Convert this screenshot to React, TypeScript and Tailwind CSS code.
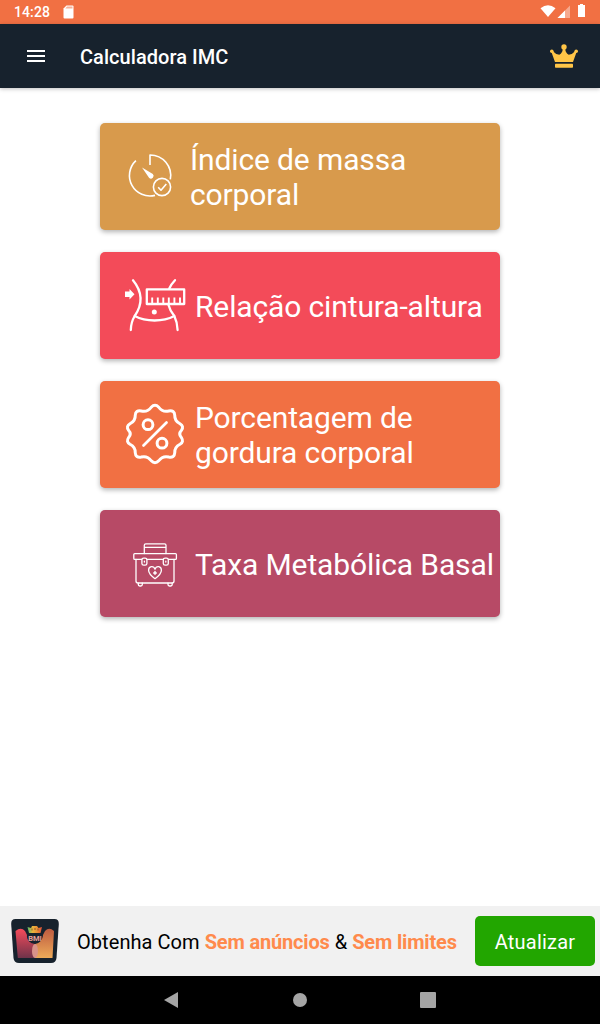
import type { ReactNode } from "react"

type CardProps = {
    color: string;
    label: string;
    textClass?: string;
    children: ReactNode;
}

function Card({ color, label, textClass = "ml-[10px]", children }: CardProps) {
    return (
        <button className={`flex h-[107px] w-[400px] items-center rounded-[5px] pl-[25px] text-left shadow-[0_2px_5px_rgba(0,0,0,0.3)] ${color}`}>
            <svg className="h-[61px] w-[60px] shrink-0 overflow-visible" viewBox="0 0 60 61" fill="none" stroke="white" strokeLinecap="round" strokeLinejoin="round">
                {children}
            </svg>
            <span className={`text-[30px] leading-[35px] tracking-[-0.13px] text-white ${textClass}`}>{label}</span>
        </button>
    )
}

function GaugeIcon() {
    return (
        <g strokeWidth="1.6" strokeLinecap="butt">
            <path d="M25 19V9A20.5 20.5 0 0 1 45.3 33.3" />
            <path d="M30 49.4A20.5 20.5 0 0 1 10.9 14.6" />
            <path d="M17 21.5L27.8 28A2.7 2.7 0 0 1 24.2 32Z" fill="white" stroke="none" />
            <circle cx="37" cy="41" r="8.6" />
            <path d="M33.2 41.2L36 44.2L41.3 38" />
        </g>
    )
}

function WaistIcon() {
    return (
        <g strokeWidth="2.3">
            <path d="M8 5.3C17.5 17 18 29 9.7 41C7 45.5 5.9 50 5.8 55" />
            <path d="M50 5.2C47.5 7.8 45.4 10.5 44.3 13.5" />
            <path d="M43.5 30C44.5 34 46.5 37.5 49.3 41C51.5 45.5 52.5 50 52.6 55" />
            <path d="M9.7 41C21 47 38 47 49.3 41" />
            <path d="M21.8 14.4H59.2V29H21.8Z" />
            <path d="M27.2 29V22.5M32.8 29V22.5M38.3 29V22.5M43.8 29V22.5M49.4 29V22.5M55 29V22.5" strokeWidth="1.9" strokeLinecap="butt" />
            <circle cx="29.3" cy="37" r="2.5" fill="white" stroke="none" />
            <path d="M0 16.5H4.5V14L9.5 19.2L4.5 24.5V22H0Z" fill="white" stroke="none" />
        </g>
    )
}

function PercentIcon() {
    return (
        <g strokeWidth="3">
            <path d="M26.25 3.25Q30 -0.6 33.75 3.25Q37.5 8.5 43.75 7Q49.5 6 49.75 11.25Q49.5 17 55 19.75Q59.2 22.2 56.5 26.25Q53 30 56.5 33.75Q59.2 37.8 55 40.25Q49.5 43 49.75 48.75Q49.5 54 43.75 53Q37.5 51.5 33.75 56.75Q30 60.6 26.25 56.75Q22.5 51.5 16.25 53Q10.5 54 10.25 48.75Q10.5 43 5 40.25Q0.8 37.8 3.5 33.75Q7 30 3.5 26.25Q0.8 22.2 5 19.75Q10.5 17 10.25 11.25Q10.5 6 16.25 7Q22.5 8.5 26.25 3.25Z" />
            <circle cx="23" cy="20.7" r="4.9" />
            <circle cx="37" cy="39.2" r="4.9" />
            <path d="M41.5 18.5L18.5 41.5" strokeWidth="2.7" />
        </g>
    )
}

function KitIcon() {
    return (
        <g strokeWidth="1.3">
            <path d="M19.3 20.5V12.3Q19.3 10.8 20.8 10.8H39.5Q41 10.8 41 12.3V20.5M19.3 14.4H41" />
            <rect x="8.8" y="20.6" width="42.6" height="5.8" rx="1" />
            <path d="M11 26.5V48Q11 50 13 50H47Q49 50 49 48V26.5" />
            <path d="M13.3 50.2V51.6Q13.3 53 14.7 53H15.9Q17.3 53 17.3 51.6V50.2M43 50.2V51.6Q43 53 44.4 53H45.8Q47.2 53 47.2 51.6V50.2" />
            <rect x="16.9" y="25.2" width="5" height="7" rx="1.8" fill="#B74A66" />
            <rect x="38.3" y="25.2" width="5" height="7" rx="1.8" fill="#B74A66" />
            <path d="M19.4 28.2V29M40.8 28.2V29" strokeWidth="1.3" />
            <path d="M30 45.7C26.5 43.2 23.6 40.5 23.6 37.3C23.6 33 28.7 32.4 30 36.2C31.3 32.4 36.4 33 36.4 37.3C36.4 40.5 33.5 43.2 30 45.7Z" />
            <path d="M30 38.6V41.2M28.7 39.9H31.3" strokeWidth="1.5" />
        </g>
    )
}

function StatusBar() {
    return (
        <div className="flex h-6 items-center justify-between bg-[#F17043] pl-[14px] pr-[14px] text-white">
            <div className="flex items-center">
                <span className="w-[49px] text-[14px] font-medium leading-6 tracking-[0.1px]">14:28</span>
                <svg className="h-[14px] w-[11px]" viewBox="0 0 11 14">
                    <path d="M3.5 0.5H9.5Q10.5 0.5 10.5 1.5V12.5Q10.5 13.5 9.5 13.5H1.5Q0.5 13.5 0.5 12.5V3.5Z" fill="white" />
                    <path d="M4 1.6H9.5V3.6H2.3Z" fill="#F8B29A" />
                </svg>
            </div>
            <svg className="h-[24px] w-[46px]" viewBox="540 0 46 24" fill="white">
                <path d="M540.5 8.2Q548 2.3 555.5 8.2L548 17Z" />
                <path d="M570 5.5V18H557.5Z" opacity="0.4" />
                <path d="M565 10.5V18H557.5Z" />
                <path d="M580 4H583V5H585V17H578V5H580Z" />
            </svg>
        </div>
    )
}

function AppBar() {
    return (
        <header className="flex h-16 items-center bg-[#17222D] pl-[27px] pr-[22px] shadow-[0_1px_4px_rgba(0,0,0,0.25)]">
            <div className="flex w-[18px] flex-col gap-[3px]">
                <div className="h-[2px] bg-white" />
                <div className="h-[2px] bg-white" />
                <div className="h-[2px] bg-white" />
            </div>
            <h1 className="ml-[35px] flex-1 pt-[2px] text-[20px] font-medium tracking-[0.05px] text-white">Calculadora IMC</h1>
            <svg className="h-6 w-7" viewBox="0 0 28 24" fill="#FFC547">
                <path d="M5 18L1.4 8L3.2 7.4Q6 10.6 9.3 10.8Q12.6 9 12.8 4.5H15.2Q15.4 9 18.7 10.8Q22 10.6 24.8 7.4L26.6 8L23 18Z" />
                <circle cx="14" cy="3" r="2.7" />
                <circle cx="1.8" cy="7.3" r="1.8" />
                <circle cx="26.2" cy="7.3" r="1.8" />
                <rect x="5" y="19.7" width="18" height="4" rx="0.8" />
            </svg>
        </header>
    )
}

function Logo() {
    return (
        <svg className="h-11 w-12" viewBox="0 0 48 44">
            <defs>
                <linearGradient id="left" x1="0" y1="0" x2="0" y2="1">
                    <stop stopColor="#F54B5B" />
                    <stop offset="1" stopColor="#70334A" />
                </linearGradient>
                <linearGradient id="right" x1="0" y1="0" x2="0" y2="1">
                    <stop stopColor="#BE5B40" />
                    <stop offset="1" stopColor="#EDAA59" />
                </linearGradient>
                <linearGradient id="crown" x1="0" y1="0" x2="1" y2="0">
                    <stop stopColor="#55B86A" />
                    <stop offset="0.35" stopColor="#E9B43C" />
                    <stop offset="0.7" stopColor="#E98B35" />
                    <stop offset="1" stopColor="#DD4B38" />
                </linearGradient>
            </defs>
            <path d="M4.5 0H43.5Q48 0 47.8 5L45.5 39Q45 44 40 44H8Q3 44 2.5 39L0.2 5Q0 0 4.5 0Z" fill="#17222D" />
            <path d="M4.5 12Q10 7.5 14 12Q16.5 16 17 20Q20 24 24 25V39H6.8Z" fill="url(#left)" />
            <path d="M43 12Q38 7.5 34 12Q31.5 16 31 20Q28 24 24 25V39H41.5Z" fill="url(#right)" />
            <ellipse cx="24" cy="32" rx="3" ry="7" fill="#D9938A" />
            <ellipse cx="23.7" cy="17" rx="7.8" ry="7.7" fill="#17222D" />
            <path d="M16.5 8L20 9L21 7H26L27.5 9L31 8L29.5 14H18Z" fill="url(#crown)" />
            <path d="M21 9.5V11.5M24 9V11M27 9.5V11.5" stroke="#7A4A2C" strokeWidth="0.8" />
            <text x="24" y="21.5" textAnchor="middle" fontSize="7.5" fontWeight="700" fill="#E7A09A">BMI</text>
        </svg>
    )
}

export default function App() {
    return (
        <div className="flex h-[1024px] w-[600px] flex-col bg-white font-[Roboto,sans-serif]">
            <StatusBar />
            <AppBar />
            <main className="flex flex-1 flex-col items-center gap-[22px] pt-[35px]">
                <Card color="bg-[#D89A4C]" label="Índice de massa corporal" textClass="ml-[5px]">
                    <GaugeIcon />
                </Card>
                <Card color="bg-[#F34B59]" label="Relação cintura-altura" textClass="ml-[10px] pt-[2px]">
                    <WaistIcon />
                </Card>
                <Card color="bg-[#F17043]" label="Porcentagem de gordura corporal">
                    <PercentIcon />
                </Card>
                <Card color="bg-[#B74A66]" label="Taxa Metabólica Basal" textClass="ml-[10px] whitespace-nowrap pt-[2px]">
                    <KitIcon />
                </Card>
            </main>
            <div className="flex h-[70px] items-center bg-[#F1F1F1] pl-[11px] pr-[5px]">
                <Logo />
                <p className="ml-[18px] flex-1 whitespace-nowrap pt-[2px] text-[20px] tracking-[0.06px] text-black">
                    Obtenha Com <b className="font-bold tracking-[-0.17px] text-[#FF8A4C]">Sem anúncios</b> &amp; <b className="font-bold tracking-[-0.17px] text-[#FF8A4C]">Sem limites</b>
                </p>
                <button className="h-[50px] w-[120px] rounded-[5px] bg-[#22A600] pt-[2px] text-[20px] tracking-[0.2px] text-white">Atualizar</button>
            </div>
            <nav className="flex h-12 items-center bg-black pl-[164px]">
                <svg className="h-4 w-[14px]" viewBox="0 0 14 16" fill="#A5A5A5">
                    <path d="M14 0V16L0 8Z" />
                </svg>
                <div className="ml-[115px] h-[14px] w-[14px] rounded-full bg-[#A5A5A5]" />
                <div className="ml-[113px] h-4 w-4 rounded-[1px] bg-[#A5A5A5]" />
            </nav>
        </div>
    )
}
